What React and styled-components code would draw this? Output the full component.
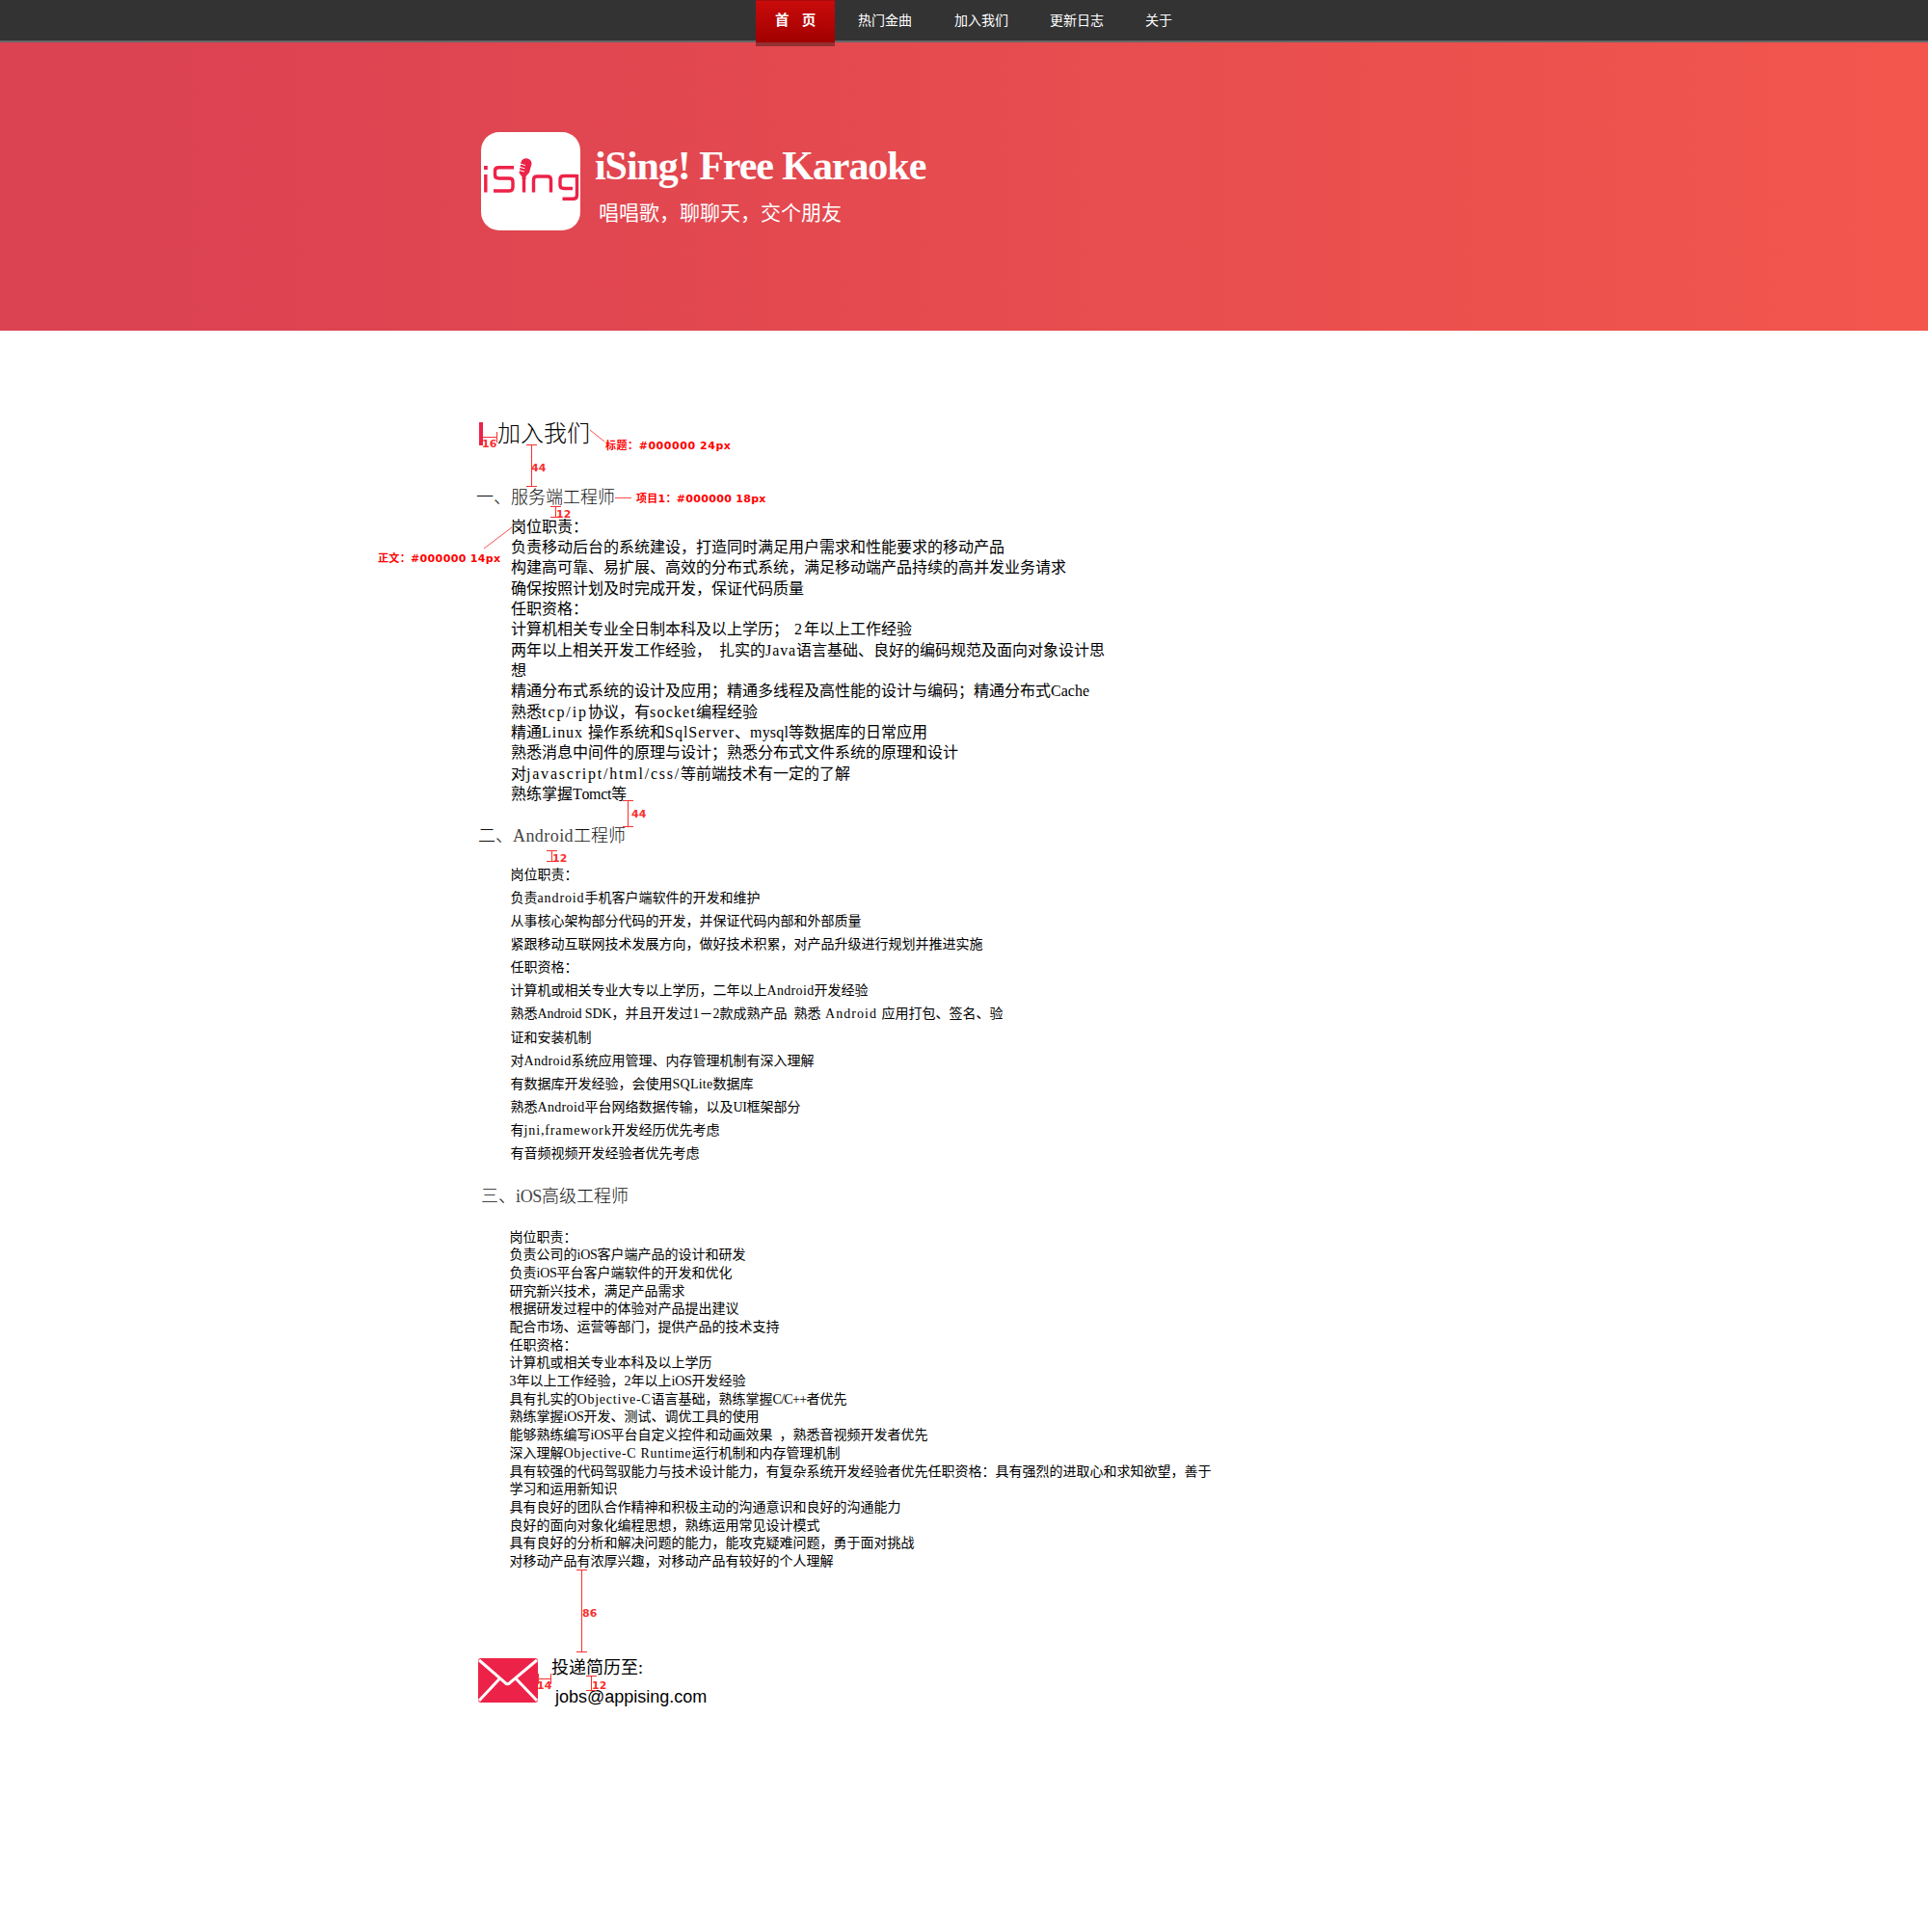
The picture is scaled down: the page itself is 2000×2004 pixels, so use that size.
import React from "react";
import styled, { createGlobalStyle } from "styled-components";

const Global = createGlobalStyle`
  * { box-sizing: border-box; }
  body { margin: 0; background: #fff; color: #000; font-family: "Liberation Serif", "Noto Sans CJK SC", serif; }
  h1, h2, p, ul { margin: 0; padding: 0; font-weight: 400; }
  ul { list-style: none; }
`;

const cjk = `"Noto Sans CJK SC", sans-serif`;

const Page = styled.div`
  position: relative;
  width: 2000px;
  height: 2004px;
  overflow: hidden;
`;

const Nav = styled.nav`
  display: flex;
  height: 44px;
  padding-left: 784px;
  background: #333;
  border-bottom: 2px solid #666;
  font-family: ${cjk};
  font-size: 14px;
  line-height: 40px;
  color: #fff;
`;

const ActiveTab = styled.a`
  position: relative;
  z-index: 1;
  width: 82px;
  height: 48px;
  padding-left: 20px;
  font-size: 14.5px;
  font-weight: 700;
  white-space: pre;
  background: linear-gradient(#c90b0b, #a10000) 0 0 / 100% 43px no-repeat, #933032;
  border-top: 1px solid #a80c0c;
  line-height: 38px;
  word-spacing: 10px;
`;

const NavLink = styled.a`
  width: ${(p) => p.$width}px;
  &:nth-child(2) { margin-left: 24px; }
`;

const Banner = styled.header`
  display: flex;
  height: 299px;
  padding: 93px 0 0 499px;
  gap: 15px;
  background: linear-gradient(90deg, #db4252 0%, #dd4351 14%, #e74c4f 55%, #f2564d 100%);
  color: #fff;
`;

const AppIcon = styled.svg`
  flex: none;
  width: 103px;
  height: 102px;
`;

const BannerText = styled.div`
  display: flex;
  flex-direction: column;
`;

const AppName = styled.h1`
  margin: 11px 0 0 0;
  font-family: "Liberation Serif", serif;
  font-size: 42px;
  font-weight: 700;
  line-height: 48px;
  letter-spacing: -1.05px;
  white-space: nowrap;
`;

const Slogan = styled.p`
  margin: 8px 0 0 4px;
  font-family: ${cjk};
  font-size: 21px;
  line-height: 30px;
`;

const Content = styled.main`
  display: flex;
  flex-direction: column;
  align-items: flex-start;
  padding: 89px 0 0 494px;
  font-family: ${cjk};
  text-spacing-trim: space-all;
`;

const Title = styled.h1`
  margin-left: 3px;
  padding-left: 15px;
  border-left: 4px solid #ed2248;
  font-size: 24px;
  font-weight: 300;
  line-height: 20px;
  height: 24px;
  margin-top: 6px;
`;

const Heading = styled.h2`
  margin: ${(p) => p.$top}px 0 0 ${(p) => p.$left}px;
  height: 24px;
  font-size: 18px;
  font-weight: 300;
  line-height: 24px;
  color: #111;
`;

const Lines = styled.ul`
  margin: ${(p) => p.$top}px 0 0 ${(p) => p.$left}px;
  font-size: ${(p) => p.$size}px;
  line-height: ${(p) => p.$pitch}px;
  white-space: pre;
`;

const Line = styled.li`
  height: ${(p) => p.$pitch}px;
`;

const HalfWidth = styled.span`
  font-family: "Liberation Serif", serif;
  letter-spacing: ${(p) => p.$spacing}em;
  font-kerning: none;
  font-variant-ligatures: none;

  ${Heading} & { color: #444; }
`;

const Contact = styled.section`
  display: flex;
  gap: 13px;
  margin: 83px 0 0 1px;
`;

const Envelope = styled.svg`
  width: 64px;
  height: 48px;
  margin-top: 8px;
`;

const ContactText = styled.div`
  display: flex;
  flex-direction: column;
  padding-top: 5px;
  font-size: 18px;
`;

const ContactLabel = styled.p`
  height: 24px;
  line-height: 24px;
  white-space: nowrap;
`;

const Email = styled.a`
  margin: 9px 0 0 4px;
  font-family: "Liberation Sans", sans-serif;
  line-height: 22px;
`;

const Marks = styled.svg`
  position: absolute;
  left: 0;
  top: 0;
  width: 1300px;
  height: 1800px;
  pointer-events: none;
`;

const Note = styled.span`
  position: absolute;
  left: ${(p) => p.$x}px;
  top: ${(p) => p.$y - 7}px;
  font: 700 11px/16px "DejaVu Sans", "Noto Sans CJK SC", sans-serif;
  letter-spacing: ${(p) => p.$spacing || 0}px;
  color: ${(p) => p.$color || "#f92f2f"};
  white-space: pre;
`;

const WIDTHS = {
  a: 444, c: 444, e: 444, f: 333, i: 278, j: 278, l: 278, m: 778, r: 333, s: 389, t: 278, w: 722, z: 444,
  A: 722, B: 667, C: 667, D: 722, E: 611, F: 556, I: 333, J: 389, K: 722, L: 611, O: 722, Q: 722, R: 667,
  S: 556, T: 611, U: 722, " ": 250, ",": 250, ":": 278, "/": 278, "-": 333, "+": 564,
};

// Spreads each Latin run so that it takes half an em per character.
function Mixed({ text }) {
  return text.split(/([\x20-\x7e]+)/).map((run, i) => {
    if (!/^[\x20-\x7e]/.test(run)) return run;
    const natural = [...run].reduce((sum, ch) => sum + (WIDTHS[ch] || 500), 0) / 1000;
    return (
      <HalfWidth key={i} $spacing={(0.5 - natural / run.length).toFixed(4)}>
        {run}
      </HalfWidth>
    );
  });
}

function TextBlock({ lines, ...box }) {
  return (
    <Lines {...box}>
      {lines.map((text) => (
        <Line key={text} $pitch={box.$pitch}>
          <Mixed text={text} />
        </Line>
      ))}
    </Lines>
  );
}

const SERVER = [
  "岗位职责：",
  "负责移动后台的系统建设，打造同时满足用户需求和性能要求的移动产品",
  "构建高可靠、易扩展、高效的分布式系统，满足移动端产品持续的高并发业务请求",
  "确保按照计划及时完成开发，保证代码质量",
  "任职资格：",
  "计算机相关专业全日制本科及以上学历； 2年以上工作经验",
  "两年以上相关开发工作经验， 扎实的Java语言基础、良好的编码规范及面向对象设计思",
  "想",
  "精通分布式系统的设计及应用；精通多线程及高性能的设计与编码；精通分布式Cache",
  "熟悉tcp/ip协议，有socket编程经验",
  "精通Linux 操作系统和SqlServer、mysql等数据库的日常应用",
  "熟悉消息中间件的原理与设计；熟悉分布式文件系统的原理和设计",
  "对javascript/html/css/等前端技术有一定的了解",
  "熟练掌握Tomct等",
];

const ANDROID = [
  "岗位职责：",
  "负责android手机客户端软件的开发和维护",
  "从事核心架构部分代码的开发，并保证代码内部和外部质量",
  "紧跟移动互联网技术发展方向，做好技术积累，对产品升级进行规划并推进实施",
  "任职资格：",
  "计算机或相关专业大专以上学历，二年以上Android开发经验",
  "熟悉Android SDK，并且开发过1－2款成熟产品 熟悉 Android 应用打包、签名、验",
  "证和安装机制",
  "对Android系统应用管理、内存管理机制有深入理解",
  "有数据库开发经验，会使用SQLite数据库",
  "熟悉Android平台网络数据传输，以及UI框架部分",
  "有jni,framework开发经历优先考虑",
  "有音频视频开发经验者优先考虑",
];

const IOS = [
  "岗位职责：",
  "负责公司的iOS客户端产品的设计和研发",
  "负责iOS平台客户端软件的开发和优化",
  "研究新兴技术，满足产品需求",
  "根据研发过程中的体验对产品提出建议",
  "配合市场、运营等部门，提供产品的技术支持",
  "任职资格：",
  "计算机或相关专业本科及以上学历",
  "3年以上工作经验，2年以上iOS开发经验",
  "具有扎实的Objective-C语言基础，熟练掌握C/C++者优先",
  "熟练掌握iOS开发、测试、调优工具的使用",
  "能够熟练编写iOS平台自定义控件和动画效果 ，熟悉音视频开发者优先",
  "深入理解Objective-C Runtime运行机制和内存管理机制",
  "具有较强的代码驾驭能力与技术设计能力，有复杂系统开发经验者优先任职资格：具有强烈的进取心和求知欲望，善于",
  "学习和运用新知识",
  "具有良好的团队合作精神和积极主动的沟通意识和良好的沟通能力",
  "良好的面向对象化编程思想，熟练运用常见设计模式",
  "具有良好的分析和解决问题的能力，能攻克疑难问题，勇于面对挑战",
  "对移动产品有浓厚兴趣，对移动产品有较好的个人理解",
];

export default function App() {
  return (
    <Page>
      <Global />
      <Nav>
        <ActiveTab>首 页</ActiveTab>
        <NavLink $width={100}>热门金曲</NavLink>
        <NavLink $width={99}>加入我们</NavLink>
        <NavLink $width={99}>更新日志</NavLink>
        <NavLink $width={60}>关于</NavLink>
      </Nav>
      <Banner>
        <AppIcon viewBox="0 0 103 102">
          <rect width="103" height="102" rx="19" fill="#fff" />
          <g fill="none" stroke="#ed2248" strokeWidth="3.4" strokeLinejoin="round">
            <path d="M4.8 44V62.5M34 36.7H18.5Q14.5 36.7 14.5 40V44.5Q14.5 48 18.5 48H29.5Q33 48 33 51.5V57Q33 61 29.5 61H13" />
            <path d="M44.5 48V62.5M54.5 62.5V49.5Q54.5 46 58 46H69Q72.500 46 72.500 49.500V62.500" />
            <path d="M99.500 45.500H86Q82 45.500 82 49V55Q82 58.500 86 58.500H95M99.500 44V65.500Q99.500 69.300 95.500 69.300H84.500" />
          </g>
          <rect x="3" y="35" width="3.800" height="4" fill="#ed2248" />
          <path d="M41.500 31Q43 27 47.500 27.300Q52.500 28.300 52.500 33L50 42L46.500 46V49H42.500V46L39.500 42.500Z" fill="#ed2248" />
          <path d="M40 33L46 34.500M40 36.300L45.500 37.800M39.500 39.600L45 41" stroke="#fff" strokeWidth="1" />
        </AppIcon>
        <BannerText>
          <AppName>iSing! Free Karaoke</AppName>
          <Slogan>唱唱歌，聊聊天，交个朋友</Slogan>
        </BannerText>
      </Banner>
      <Content>
        <Title>加入我们</Title>
        <Heading $top={40} $left={0}>一、服务端工程师</Heading>
        <TextBlock lines={SERVER} $top={8.6} $left={36} $size={16} $pitch={21.33} />
        <Heading $top={20} $left={2}><Mixed text="二、Android工程师" /></Heading>
        <TextBlock lines={ANDROID} $top={16.8} $left={35.5} $size={14} $pitch={24.08} />
        <Heading $top={19.6} $left={5}><Mixed text="三、iOS高级工程师" /></Heading>
        <TextBlock lines={IOS} $top={22} $left={34.5} $size={14} $pitch={18.69} />
        <Contact>
          <Envelope viewBox="0 0 64 48">
            <rect x="1" y="1" width="62" height="46" rx="3" fill="#ed2248" />
            <path d="M2 3L28 25.500Q31.500 30 35 25.500L62 3M23.500 22L2 45M40 22L62 45" fill="none" stroke="#fff" strokeWidth="3" />
          </Envelope>
          <ContactText>
            <ContactLabel><Mixed text="投递简历至:" /></ContactLabel>
            <Email>jobs@appising.com</Email>
          </ContactText>
        </Contact>
      </Content>
      <Marks viewBox="0 0 1300 1800" fill="none" stroke="#f92f2f">
        <path d="M501 453.500H516M515.500 448V459" />
        <path d="M546 461.500H557M551.500 461.500V504.500M546 504.500H557" />
        <path d="M571 525.500H582M576.500 525.500V536.500M571 536.500H582" />
        <path d="M646 830.500H657M651.500 830.500V857.500M646 857.500H657" />
        <path d="M567 882.500H578M572.500 882.500V893.500M567 893.500H578" />
        <path d="M598 1628.500H609M603.500 1628.500V1713.500M598 1713.500H609" />
        <path d="M558.500 1736V1747M558.500 1741.500H571.500M571.500 1736V1747" />
        <path d="M608 1738.500H619M613.500 1738.500V1753.500M608 1753.500H619" />
        <path d="M612 446L627 458M638 516.500H655M502 569L531 547" strokeOpacity=".85" />
      </Marks>
      <Note $x={500} $y={460}>16</Note>
      <Note $x={551} $y={485}>44</Note>
      <Note $x={577} $y={533}>12</Note>
      <Note $x={655} $y={844}>44</Note>
      <Note $x={573} $y={890}>12</Note>
      <Note $x={604} $y={1673}>86</Note>
      <Note $x={557} $y={1748}>14</Note>
      <Note $x={614} $y={1748}>12</Note>
      <Note $x={628} $y={462} $color="#f00" $spacing={0.55}>标题：#000000 24px</Note>
      <Note $x={660} $y={517} $color="#f00" $spacing={0.3}>项目1：#000000 18px</Note>
      <Note $x={392} $y={579} $color="#f00" $spacing={0.35}>正文：#000000 14px</Note>
    </Page>
  );
}
